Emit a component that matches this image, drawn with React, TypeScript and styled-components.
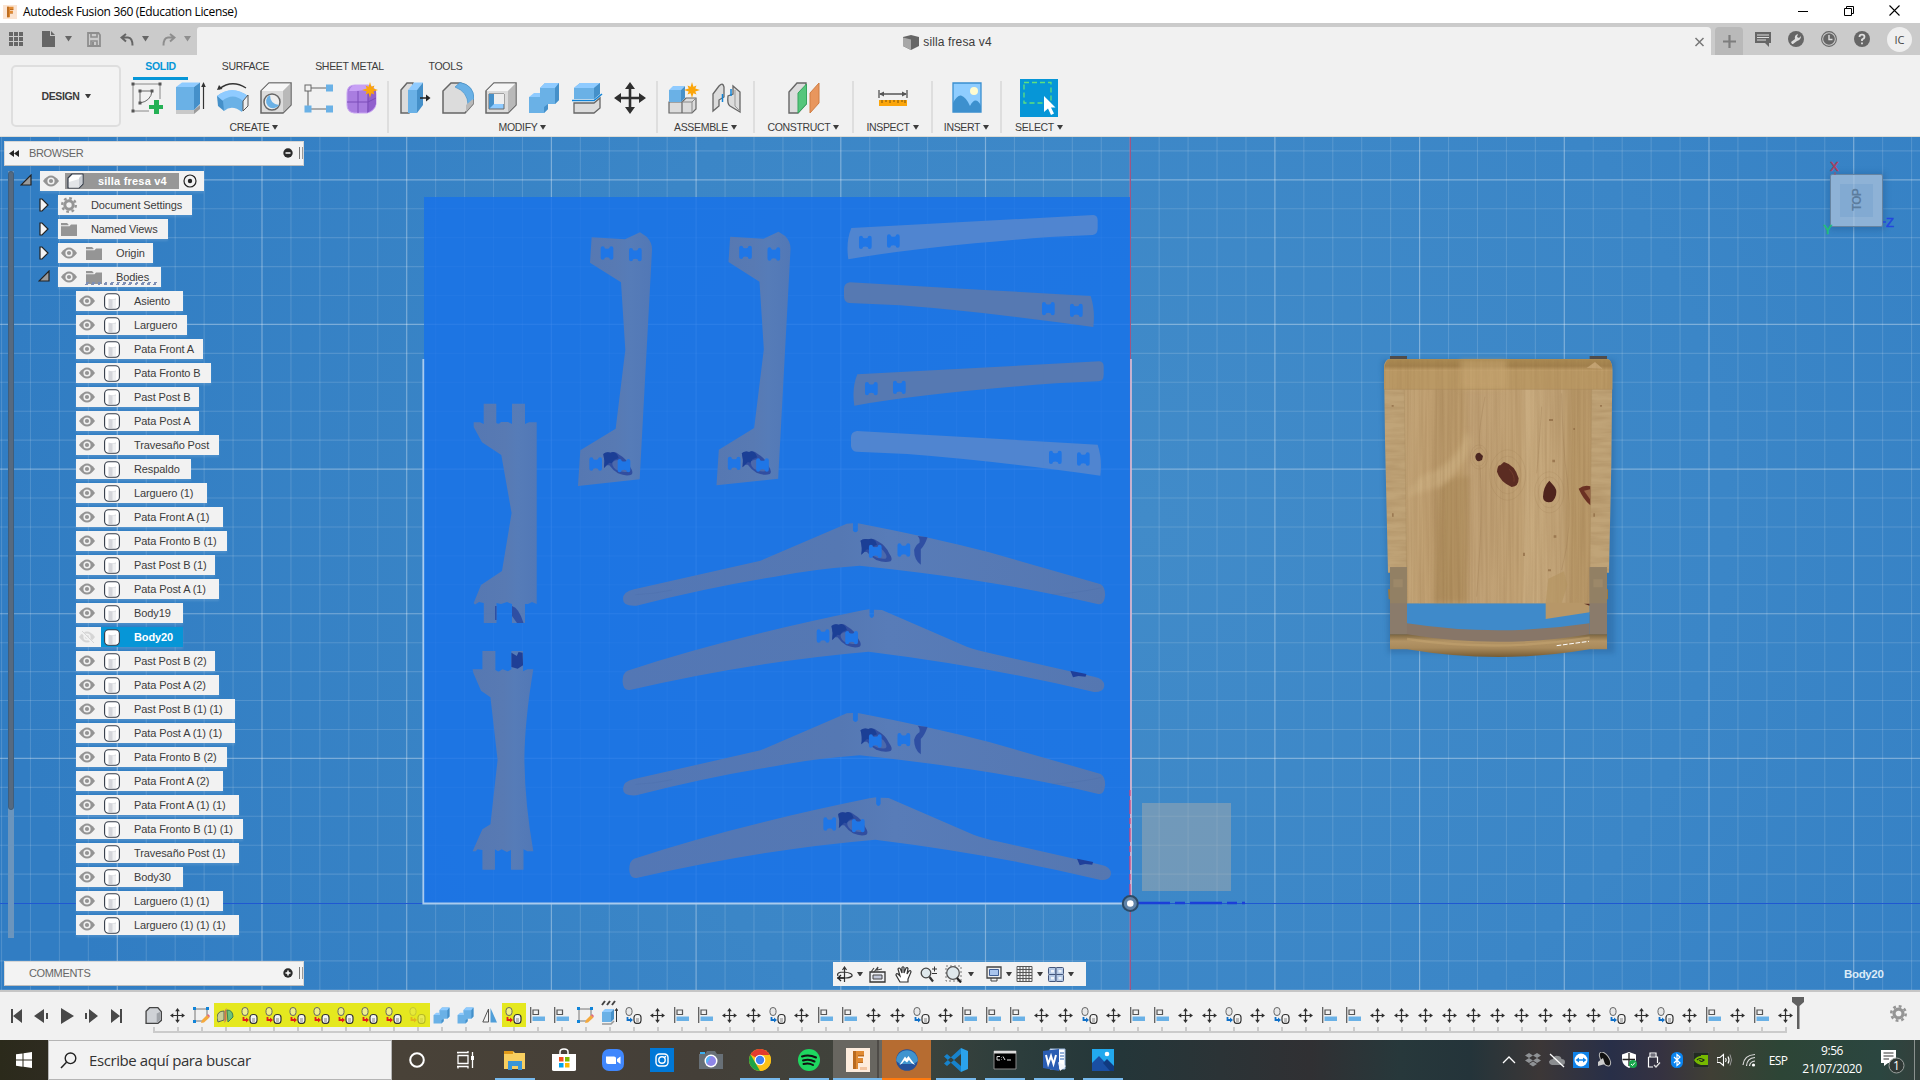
import React from 'react';
import styled, { createGlobalStyle } from 'styled-components';

const Global = createGlobalStyle`
  * { box-sizing: border-box; }
  body { margin: 0; overflow: hidden; background: #f1f1f1; }
  svg { display: block; flex: none; }
`;

const ui = `"Liberation Sans", Arial, sans-serif`;
const segoe = `"Open Sans", "Noto Sans", sans-serif`;

const Shell = styled.div`
  width: 1920px;
  height: 1080px;
  display: flex;
  flex-direction: column;
  font-family: ${ui};
  color: #3c3c3c;
  background: #f1f1f1;
  overflow: hidden;
  white-space: nowrap;
`;

/* ---------- title bar ---------- */
const TitleBar = styled.header`
  height: 23px;
  flex: none;
  background: #fff;
  display: flex;
  align-items: center;
  padding: 0 3px;
`;
const TitleText = styled.span`
  flex: 1;
  margin-left: 6px;
  font: 12px/22px ${segoe};
  letter-spacing: -0.33px;
  color: #000;
`;
const WinButton = styled.span`
  width: 45.5px;
  display: flex;
  justify-content: center;
  padding-bottom: 2px;
`;

/* ---------- tab strip ---------- */
const Strip = styled.div`
  height: 32px;
  flex: none;
  background: #cbcbcb;
  display: flex;
`;
const Quick = styled.div<{ $w: number }>`
  width: ${p => p.$w}px;
  display: flex;
  align-items: center;
  color: #666;
`;
const Cell = styled.span<{ $w: number; $faded?: boolean }>`
  width: ${p => p.$w}px;
  display: flex;
  justify-content: center;
  opacity: ${p => (p.$faded ? 0.6 : 1)};
`;
const DocTab = styled.div`
  width: 1514px;
  margin-top: 4px;
  padding: 2px 5px 0 0;
  background: #f1f1f1;
  border-radius: 3px 4px 0 0;
  display: flex;
  align-items: center;
`;
const DocName = styled.div`
  flex: 1;
  padding-left: 4px;
  display: flex;
  justify-content: center;
  align-items: center;
  gap: 4px;
  font-size: 12px;
  letter-spacing: 0.12px;
`;
const AddTab = styled.div`
  width: 28px;
  margin: 4px 3px 0 4px;
  background: #b9b9b9;
  border-radius: 4px 4px 0 0;
  display: flex;
  align-items: center;
  justify-content: center;
`;
const Avatar = styled.div`
  width: 25px;
  height: 25px;
  margin: 0 0 0 9px;
  border-radius: 50%;
  background: #efefef;
  font: 11px/25px ${segoe};
  text-align: center;
  color: #444;
`;

/* ---------- ribbon ---------- */
const Ribbon = styled.div`
  height: 82px;
  flex: none;
  display: flex;
  border-bottom: 1px solid #dcdcd6;
`;
const DesignButton = styled.button`
  width: 110px;
  height: 62px;
  margin: 10px 0 0 11px;
  background: #f3f3f3;
  border: 2px solid #dedede;
  border-radius: 5px;
  display: flex;
  align-items: center;
  justify-content: center;
  gap: 5px;
  font: bold 10.5px ${ui};
  letter-spacing: -0.35px;
  color: #3c3c3c;
`;
const RibbonBody = styled.div`
  display: flex;
  flex-direction: column;
`;
const Tabs = styled.nav`
  height: 26px;
  display: flex;
  padding-left: 11px;
`;
const Tab = styled.div<{ $w: number; $active?: boolean }>`
  width: ${p => p.$w}px;
  display: flex;
  justify-content: center;
  font-size: 10.5px;
  line-height: 22px;
  letter-spacing: -0.3px;
  font-weight: ${p => (p.$active ? 700 : 400)};
  color: ${p => (p.$active ? '#0696d7' : '#3c3c3c')};
`;
const TabText = styled.span<{ $active?: boolean }>`
  height: 24.5px;
  padding: 0 ${p => (p.$active ? 12 : 0)}px;
  border-bottom: 3px solid ${p => (p.$active ? '#0696d7' : 'transparent')};
`;
const Groups = styled.div`display: flex;`;
const Group = styled.section<{ $w: number; $last?: boolean }>`
  width: ${p => p.$w}px;
  height: 52px;
  display: flex;
  flex-direction: column;
  align-items: center;
  border-right: ${p => (p.$last ? 0 : 2)}px solid #dedede;
`;
const Tools = styled.div`
  height: 36px;
  flex: none;
  display: flex;
  gap: 11px;
  align-items: center;
  padding-bottom: 2px;
`;
const GroupLabel = styled.div`
  display: flex;
  align-items: center;
  gap: 3px;
  font-size: 10.5px;
  line-height: 21px;
  letter-spacing: -0.33px;
`;
const SelectTile = styled.div`
  width: 38px;
  height: 38px;
  flex: none;
  background: #0696d7;
  display: flex;
  align-items: center;
  justify-content: center;
`;

/* ---------- canvas ---------- */
const Canvas = styled.main`
  position: relative;
  height: 853px;
  flex: none;
`;
const Side = styled.aside`
  position: absolute;
  left: 0;
  top: 4px;
  width: 320px;
  display: flex;
  flex-direction: column;
`;
const PanelHead = styled.div<{ $top?: number }>`
  width: 300px;
  height: 25px;
  margin: ${p => p.$top || 0}px 0 0 4px;
  background: #f3f3f3;
  border: 1px solid #d6d6d6;
  border-bottom-color: #bdbdbd;
  display: flex;
  align-items: center;
  padding: 0 0 1px 4px;
  font-size: 11px;
  letter-spacing: -0.35px;
  color: #666;
`;
const HeadName = styled.span`
  width: 254px;
  flex: none;
  margin-left: 10px;
`;
const Collapse = styled.span`width: 10px; flex: none;`;
const Grip = styled.span`
  width: 4px;
  height: 12px;
  flex: none;
  margin-left: 6px;
  border-left: 1px solid #777;
  border-right: 1px solid #999;
`;
const TreeArea = styled.div`
  display: flex;
  padding: 5px 0 0 8px;
`;
const Track = styled.div`
  width: 6px;
  height: 767px;
  background: #6b95bd;
`;
const Thumb = styled.div`
  height: 639px;
  border-radius: 3px;
  background: #566a80;
  border: 1px solid #405e7c;
`;
const Tree = styled.div`
  display: flex;
  flex-direction: column;
  gap: 4px;
`;
const Row = styled.div<{ $in: number }>`
  display: flex;
  align-items: center;
  height: 20px;
  padding-left: ${p => p.$in}px;
`;
const Twist = styled.span<{ $w: number }>`
  width: ${p => p.$w}px;
  height: 14px;
`;
const Chip = styled.div<{ $w: number }>`
  position: relative;
  width: ${p => p.$w}px;
  height: 20px;
  background: #f2f2f2;
  display: flex;
  align-items: center;
  padding-left: 3px;
  font-size: 11px;
  letter-spacing: -0.1px;
  color: #3c3c3c;
  box-shadow: 0 2px 2px rgba(255, 255, 255, 0.12);
`;
const Slot = styled.span<{ $w: number; $gap?: number }>`
  width: ${p => p.$w}px;
  margin-left: ${p => p.$gap || 0}px;
  display: flex;
`;
const RootName = styled.div`
  width: 114px;
  height: 16px;
  margin-left: 6px;
  padding-left: 2px;
  background: #979797;
  display: flex;
  align-items: center;
  font-weight: 700;
  letter-spacing: 0.2px;
  color: #fff;
`;
const Picked = styled.div`
  display: flex;
  align-items: center;
  align-self: stretch;
  flex: 1;
  margin-left: -3px;
  padding-left: 3px;
  background: #0696d7;
  color: #fff;
  font-weight: 700;
`;
const Stitch = styled.i`
  position: absolute;
  left: 25px;
  right: 2px;
  bottom: 2px;
  height: 3px;
  background: repeating-linear-gradient(115deg, transparent 0 3px, #7e8fb5 3px 5.6px);
`;
const NavBar = styled.div`
  position: absolute;
  left: 833px;
  top: 825px;
  width: 253px;
  height: 24px;
  background: #f2f2f2;
  display: flex;
  align-items: center;
`;
const Hint = styled.div`
  position: absolute;
  left: 1844px;
  top: 829px;
  font: bold 11.5px/16px ${ui};
  letter-spacing: -0.35px;
  color: #dcebf7;
`;

/* ---------- timeline ---------- */
const Timeline = styled.div`
  height: 50px;
  flex: none;
  border-top: 2px solid #c6c6c6;
  background: #f1f1f1;
  display: flex;
`;
const Player = styled.div`
  width: 142px;
  height: 47px;
  padding-left: 4px;
  display: flex;
  align-items: center;
  color: #484848;
`;
const Steps = styled.div`
  width: 1656px;
  display: flex;
  padding-top: 11px;
`;
const Step = styled.div<{ $hot?: boolean; $end?: 'l' | 'r' }>`
  width: 24px;
  height: 31px;
  flex: none;
  display: flex;
  flex-direction: column;
  align-items: center;
  background:
    ${p => (p.$end === 'l' ? 'linear-gradient(#cbcbcb, #cbcbcb) 11px 28px / 13px 2px no-repeat' : p.$end === 'r' ? 'linear-gradient(#cbcbcb, #cbcbcb) 0 28px / 13px 2px no-repeat' : 'linear-gradient(#cbcbcb, #cbcbcb) 0 28px / 24px 2px no-repeat')},
    linear-gradient(${p => (p.$hot ? '#e5e81f, #e5e81f' : 'transparent, transparent')}) 0 0 / 24px 24px no-repeat;
  &::after { content: ''; width: 2px; height: 5px; flex: none; background: #cbcbcb; }
`;
const StepIcon = styled.span<{ $faded?: boolean; $raised?: boolean }>`
  height: ${p => (p.$raised ? 29 : 24)}px;
  margin-top: ${p => (p.$raised ? -5 : 0)}px;
  padding-right: 1px;
  flex: none;
  display: flex;
  align-items: center;
  opacity: ${p => (p.$faded ? 0.25 : 1)};
`;
const TimelineEnd = styled.div`
  flex: 1;
  display: flex;
  justify-content: space-between;
  align-items: center;
  padding: 0 13px 6px 0;
  margin-left: -7px;
`;

/* ---------- task bar ---------- */
const TaskBar = styled.footer`
  height: 40px;
  flex: none;
  display: flex;
  color: #fff;
  background: linear-gradient(90deg, #2b2a1b 0, #2e2b20 48px, #494238 400px, #443f38 700px, #3e443d 900px, #2c3d3c 1020px,
    #243639 1120px, #2b3336 1220px, #303033 1310px, #27383b 1400px, #24343a 1470px, #3c3737 1540px, #282f48 1610px,
    #353241 1660px, #403f35 1710px, #2d4536 1780px, #2b4640 1880px, #34403c 1920px);
`;
const StartButton = styled.div`
  width: 48px;
  display: flex;
  align-items: center;
  justify-content: center;
`;
const Search = styled.div`
  width: 344px;
  background: #f2f2f2;
  border: 1px solid #b5b5b5;
  display: flex;
  align-items: center;
  padding-left: 11px;
  gap: 12px;
  font: 15px ${segoe};
  letter-spacing: -0.41px;
  color: #333;
`;
const TaskItem = styled.div<{ $open?: boolean; $bg?: string; $line?: string; $wide?: boolean }>`
  width: 49px;
  height: 40px;
  flex: none;
  display: flex;
  flex-direction: column;
  align-items: center;
  justify-content: space-between;
  padding-top: 8px;
  background: ${p => p.$bg || 'none'};
  &::after {
    content: '';
    width: ${p => (p.$wide ? '100%' : '40px')};
    height: 2px;
    flex: none;
    background: ${p => (p.$open ? p.$line || '#76b9ed' : 'transparent')};
  }
`;
const Tray = styled.div`
  margin-left: auto;
  display: flex;
  align-items: center;
  font: 12px ${segoe};
`;
const Lang = styled.span`
  width: 34px;
  text-align: center;
  letter-spacing: -0.6px;
`;
const Clock = styled.div`
  width: 74px;
  text-align: center;
  line-height: 18px;
  letter-spacing: -0.42px;
`;
const Notice = styled.div`
  width: 46px;
  height: 40px;
  display: flex;
  align-items: center;
  justify-content: center;
  border-right: 1px solid #8a918e;
  margin-right: 5px;
`;

/* ---------- small glyphs ---------- */
const Caret = ({ s = 6 }: { s?: number }) => (
  <svg width={s} height={s * 0.8} viewBox="0 0 10 8"><path d="M0 0H10L5 8Z" fill="currentColor" /></svg>
);
const F360 = ({ s, small }: { s: number; small?: boolean }) => (
  <svg width={s} height={s} viewBox="0 0 24 24">
    <rect width="24" height="24" fill={small ? '#fbe4d2' : '#fdecdd'} />
    <path d="M7 3h11v4h-6v3h5v4h-5v7H7Z" fill="#e08a33" />
    <path d="M7 3h3v18H7Z" fill="#b96a1f" /><path d="M12 7h6v1.5h-6zM12 14h5v1h-5z" fill="#b96a1f" />
    {!small && <path d="M14 19h7v3h-7z" fill="#f3c5a2" />}
  </svg>
);
const Ic = ({ children, s = 32 }: { children: React.ReactNode; s?: number }) => (
  <svg width={s} height={s} viewBox={`0 0 ${s} ${s}`} fill="none">{children}</svg>
);
const B1 = '#6ab1e6', B2 = '#8fcbff', B3 = '#4590c9', G1 = '#dcdcdc', G2 = '#f6f6f6', G3 = '#b9b9b9', LN = '#666';
const Star = ({ x, y, r }: { x: number; y: number; r: number }) => {
  const pts = Array.from({ length: 16 }, (_, i) => {
    const a = (i * Math.PI) / 8 - Math.PI / 2;
    const k = i % 2 ? r * 0.45 : i % 4 ? r * 0.8 : r;
    return `${(x + Math.cos(a) * k).toFixed(1)},${(y + Math.sin(a) * k).toFixed(1)}`;
  }).join(' ');
  return <polygon points={pts} fill="#fba50a" />;
};
const MoveShape = ({ c = '#2f2f2f' }: { c?: string }) => (
  <path fill={c} d="M16 0l5 7h-3.7v7.700H25V11l7 5-7 5v-3.700h-7.700V25H21l-5 7-5-7h3.700v-7.700H7V21l-7-5 7-5v3.700h7.700V7H11Z" />
);

const SketchIcon = () => <Ic>
  <path d="M2 2H29M2 2V29M2 29H18M29 2V17" stroke="#888" strokeWidth="1" />
  <path d="M9 9H21M9 9V21M21 9Q20 19 9 21" stroke="#666" />
  <path d="M.5.500h3v3h-3zM27.500.500h3v3h-3zM.5 27.500h3v3h-3zM7.500 7.500h3v3h-3zM19.500 7.500h3v3h-3zM7.500 19.500h3v3h-3z" fill="#555" />
  <path d="M23 18h5v5h4v4h-4v5h-5v-5h-5v-4h5Z" fill="#25b155" />
</Ic>;
const ExtrudeIcon = () => <Ic>
  <path d="M2 28H20L26 23V27L20 32H2Z" fill="#9b9b9b" /><path d="M2 28H20V32H2Z" fill="#c9c9c9" />
  <path d="M2 5H20V28H2Z" fill={B1} /><path d="M2 5L8 .5H26L20 5Z" fill={B2} /><path d="M20 5L26 .5V22L20 28Z" fill={B3} />
  <path d="M29.500 27V3" stroke="#333" strokeWidth="1.200" /><path d="M27.200 5L29.500 0l2.300 5Z" fill="#333" />
</Ic>;
const RevolveIcon = () => <Ic>
  <path d="M0 14Q15 3 31 14L25 30Q15 22 7 29Z" fill={B1} /><path d="M0 14Q15 2 31 14L26 19Q16 10 5 19Z" fill={B2} />
  <path d="M26 19L31 13V24L26 29Z" fill="#eee" stroke="#555" /><path d="M0 14L6 19L7 29L1 24Z" fill={B3} />
  <path d="M2 7Q15-3 29 6" stroke="#333" strokeWidth="1.300" /><path d="M0 8L2 3l3.500 4Z" fill="#333" />
</Ic>;
const Box3 = () => <>
  <path d="M1 9L9 1H31V23L23 31H1Z" fill={G1} stroke={LN} strokeWidth="1.500" />
  <path d="M1.500 9L9 1.500H30.500L23 9Z" fill={G2} /><path d="M23 9L30.500 1.500V23L23 30.500Z" fill={G3} />
</>;
const HoleIcon = () => <Ic><Box3 /><circle cx="12" cy="20" r="8" fill="#eee" stroke={LN} strokeWidth="1.500" />
  <path d="M10 13Q10 22 19 23A7 7 0 1 1 10 13Z" fill={B1} /></Ic>;
const PatternIcon = () => <Ic>
  <path d="M8 6H24M5 9V24M8 27H24" stroke={LN} strokeWidth="1.100" />
  <rect x="2" y="3" width="6" height="6" stroke={LN} /><path d="M23 2.500h7v7h-7zM23 23.500h7v7h-7zM1.500 23.500h7v7h-7z" fill={B1} />
</Ic>;
const FormIcon = () => <Ic>
  <path d="M1 11Q1 3 9 3H22Q30 5 30 12V22Q29 29 21 31H8Q1 30 1 23Z" fill="#a97de0" stroke="#c9a6f2" />
  <path d="M3 9Q5 3 10 3H22L26 7Q16 9 3 9Z" fill="#c7a0f5" /><path d="M22 11L30 8V22Q28 28 21 31Z" fill="#9160cd" />
  <path d="M12 9V31M1 20H22L30 16M22 10V30" stroke="#7a4cb8" strokeWidth="1" /><Star x={24} y={8} r={8} />
</Ic>;
const PressIcon = () => <Ic>
  <path d="M2 8L8 1H14V25L10 31H2Z" fill={G1} stroke={LN} strokeWidth="1.500" />
  <path d="M9 8H18V31H9Z" fill={B1} /><path d="M9 8L15 .5H24L18 8Z" fill={B2} /><path d="M18 8L24 .5V23L18 31Z" fill={B3} />
  <path d="M21 16H28" stroke="#222" strokeWidth="1.500" /><path d="M27 12.500L31.500 16L27 19.500Z" fill="#222" />
</Ic>;
const FilletIcon = () => <Ic>
  <path d="M1 9L9 1H18Q31 4 31 18V22L23 31H1Z" fill={G1} stroke={LN} strokeWidth="1.500" />
  <path d="M13 5L18 .5Q32 3 32 17L26 23Q26 10 13 5Z" fill={B1} stroke={B3} strokeWidth=".7" /><path d="M24 23L31 17V22L24 30Z" fill={G3} />
</Ic>;
const ShellIcon = () => <Ic><Box3 /><path d="M4 12H19V27H4Z" fill={B2} stroke={LN} /><path d="M4 12H9V22L4 27Z" fill={B3} /><path d="M9 12H19V22H9Z" fill="#eee" /></Ic>;
const Combine = () => <>
  <path d="M1 15H12V6L17 1H31V18L27 22H20V27L16 31H1Z" fill={B1} />
  <path d="M1 15L6 11H12V15ZM12 6L17 1H31L27 6Z" fill={B2} /><path d="M27 6L31 1V18L27 22ZM16 25L20 22V27L16 31Z" fill={B3} />
</>;
const CombineIcon = () => <Ic><Combine /></Ic>;
const SplitIcon = () => <Ic>
  <path d="M3 6L9 1H29V12L23 17H3Z" fill={B1} /><path d="M3 6L9 1H29L23 6Z" fill={B2} /><path d="M23 6L29 1V12L23 17Z" fill={B3} />
  <path d="M3 21H23L29 16V26L23 31H3Z" fill={G1} stroke={LN} strokeWidth="1.300" /><path d="M1 18.500H23L31 12" stroke="#1184d8" strokeWidth="1.600" />
</Ic>;
const MoveIcon = () => <Ic><MoveShape /></Ic>;
const AssembleIcon = () => <Ic>
  <path d="M1 20H14V31H1ZM14 20L18 16H28V27L24 31H14Z" fill={G1} stroke={LN} strokeWidth="1.200" /><path d="M14 20H24L28 16M24 20V31" stroke="#888" />
  <path d="M1 8H13V20H1Z" fill={B1} /><path d="M1 8L5 4H17L13 8Z" fill={B2} /><path d="M13 8L17 4V16L13 20Z" fill={B3} /><Star x={24} y={8} r={8} />
</Ic>;
const JointIcon = () => <Ic>
  <path d="M2 12L8 4Q12 0 13 5V15L8 18V24L2 29Z" fill={G1} stroke={LN} strokeWidth="1.300" />
  <path d="M29 30L19 24Q16 22 17 14L22 12V4L29 10Z" fill={G1} stroke={LN} strokeWidth="1.300" />
  <path d="M11.500 12V20M20 7V14" stroke="#1184d8" strokeWidth="1.500" /><path d="M24 8V24L29 29" stroke="#999" />
</Ic>;
const PlaneIcon = () => <Ic>
  <path d="M1 10L9 1H18V22L10 31H1Z" fill={G1} stroke={LN} strokeWidth="1.400" /><path d="M10 11L18.500 2V22L10 31Z" fill="#56c67c" stroke="#36a55d" />
  <path d="M22 11L31 1V21L22 31Z" fill="#e8965d" stroke="#cf7d43" />
</Ic>;
const RulerIcon = () => <Ic><path d="M2 8V16M30 8V16M3 12H29" stroke="#555" strokeWidth="1.300" /><path d="M2 12l5-2.500v5ZM30 12l-5-2.500v5Z" fill="#555" />
  <path d="M2 18H30V24H2Z" fill="#fba50a" /><path d="M5 18v3M9 18v2M13 18v3M17 18v2M21 18v3M25 18v2M28 18v3" stroke="#7a5208" /></Ic>;
const InsertIcon = () => <Ic><path d="M2 1H30V30H2Z" fill="#8fcdff" stroke="#3a8fd0" strokeWidth="1.300" /><circle cx="23" cy="9" r="4" fill="#fffbd0" />
  <path d="M2 21Q6 13 10 13.500Q15 15 19 24Q22 18 25 18.500Q28 19 30 24V30H2Z" fill="#3d90ce" /></Ic>;
const SelectIcon = () => <svg width="34" height="34" viewBox="0 0 34 34" fill="none"><path d="M2 1.500H29V22H2Z" stroke="#5fe07c" strokeWidth="1.300" strokeDasharray="5 3" />
  <path d="M22 15V31L26 27.500L29 34L32 32.500L29 26.500H33.500Z" fill="#fff" /></svg>;

/* ---------- tree glyphs ---------- */
const Eye = ({ off }: { off?: boolean }) => (
  <svg width="16" height="12" viewBox="0 0 16 12" fill="none" opacity={off ? 0.3 : 1}>
    <path d="M0 6Q8-5 16 6Q8 17 0 6Z" fill="#949494" /><circle cx="8" cy="6" r="3.600" fill="#f2f2f2" /><circle cx="8" cy="6" r="2.100" fill="#949494" />
    {off && <path d="M2 0L14 12" stroke="#f2f2f2" strokeWidth="2.500" />}{off && <path d="M3 0L15 12" stroke="#949494" />}
  </svg>
);
const BodyGlyph = () => (
  <svg width="16" height="17" viewBox="0 0 16 17"><rect x=".6" y=".8" width="14.800" height="15.400" rx="4" fill="#fff" stroke="#333b48" strokeWidth="1.100" />
    <path d="M4.500 5.500Q8 7 12 5.500V15H4.500Z" fill="#d4d5da" /><path d="M8.500 6.500H12V15H8.500Z" fill="#eff0f2" /></svg>
);
const Folder = () => <svg width="16" height="13" viewBox="0 0 16 13"><path d="M0 0H6L7.500 1.500V2.200H0ZM0 3.200H8.500L10 1.500H16V13H0Z" fill="#959595" /></svg>;
const Gear = ({ s = 16 }: { s?: number }) => (
  <svg width={s} height={s} viewBox="0 0 16 16" fill="none"><circle cx="8" cy="8" r="4.200" stroke="#959595" strokeWidth="3" />
    <circle cx="8" cy="8" r="6.800" stroke="#959595" strokeWidth="2.400" strokeDasharray="2.670 2.670" /></svg>
);
const Closed = () => <svg width="10" height="14" viewBox="0 0 10 14"><path d="M1 1H3L9 7L3 13H1Z" fill="#f4f4f4" stroke="#222" strokeWidth="1.200" /></svg>;
const Open = () => <svg width="12" height="12" viewBox="0 0 12 12"><path d="M11 1V11H1Z" fill="#9a9a9a" stroke="#222" strokeWidth="1.200" /></svg>;
const CubeGlyph = () => <svg width="17" height="16" viewBox="0 0 17 16"><path d="M1 5L5 1H16V11L12 15H1Z" fill="#fff" stroke="#333b48" strokeWidth="1.200" strokeLinejoin="round" /><path d="M12 5L15.400 1.600V11L12 14.400Z" fill="#c8ccd2" /><path d="M2 14.400V9L12 6V14.400Z" fill="#e3e5e8" /></svg>;

/* ---------- timeline glyphs ---------- */
const tl: Record<string, (hot: boolean) => React.ReactNode> = {
  b: () => <svg width="17" height="17" viewBox="0 0 32 32" fill="none"><path d="M2 8L9 1H24L31 9V25L24 31H2Z" fill="#cfd2d6" stroke="#444" strokeWidth="2.500" /><path d="M22 12L29 9V24L22 30Z" fill="#9fa3a8" /></svg>,
  m: () => <svg width="15" height="15" viewBox="0 0 32 32"><MoveShape /></svg>,
  s: () => <svg width="17" height="17" viewBox="0 0 17 17" fill="none"><path d="M2 2H14V9M2 2V14H10" stroke="#777" /><path d="M0 0h3v3H0zM13 0h3v3h-3zM0 13h3v3H0z" fill="#1184d8" /><path d="M8 16L9 13L14 8L16.500 10.500L11 15.500Z" fill="#f5a93c" /><path d="M14 8l1-1 2 2-1 1.500Z" fill="#e0667c" /></svg>,
  p: () => <svg width="17" height="15" viewBox="0 0 17 15"><path d="M0 10Q0 3 7 3V12L1 14Z" fill="#c9cf94" stroke="#5d6b57" /><path d="M7.500 3L9.500 0V12L7.500 15Z" fill="#c8755a" /><path d="M10 2Q16 2 16 9L11 14Z" fill="#6cc37b" stroke="#3c7f54" /></svg>,
  c: hot => <svg width="17" height="17" viewBox="0 0 17 17" fill="none"><rect x="1" y=".5" width="6" height="8" rx="3" fill={hot ? '#eef08a' : '#e8e8e8'} stroke="#666" /><rect x="9" y="7.500" width="7" height="9" rx="3" fill="#f4f4f4" stroke="#333" strokeWidth="1.200" /><path d="M11 11h3v5h-3z" fill="#bbb" /><path d="M2.500 10V13H6" stroke={hot ? '#e21c1c' : '#1070c8'} strokeWidth="1.800" /><path d="M5 10.500L8 13L5 15.500Z" fill={hot ? '#e21c1c' : '#1070c8'} /></svg>,
  j: () => <svg width="17" height="17" viewBox="0 0 32 32"><Combine /></svg>,
  r: () => <svg width="15" height="15" viewBox="0 0 15 15"><path d="M6.500 1V14H.8Z" fill="#f4f4f4" stroke="#555" /><path d="M8.500 0L15 14.500H8.500Z" fill="#4f9ed9" /></svg>,
  a: () => <svg width="15" height="16" viewBox="0 0 15 16" fill="none"><path d="M.7 0V16" stroke="#555" strokeWidth="1.200" /><path d="M3 3H8.500V7.500H3Z" stroke="#555" strokeWidth="1.200" /><path d="M2.500 9.500H15V14H2.500Z" fill={B1} /></svg>,
  e: () => <svg width="17" height="26" viewBox="0 0 17 26" fill="none"><path d="M1 12H10V22H1Z" fill={B1} /><path d="M1 12L4 9H13L10 12Z" fill={B2} /><path d="M10 12L13 9V19L10 22Z" fill={B3} /><path d="M1 24H10L13 21" stroke="#999" strokeWidth="1.600" /><path d="M15.500 22V9M14 11l1.500-2.500L17 11" stroke="#333" /><path d="M1 5L4 1M6 5L9 1M11 5L14 1" stroke="#444" strokeWidth="2" /></svg>,
};
const steps = 'bmspcccccccc' + 'jjrc' + 'aase' + 'cmaammcmaammcmaaammcmaammcmcmaa' + 'mmmmmmmmmm' + 'cmcmamam';

/* ---------- data ---------- */
const bodies: [string, number][] = [
  ['Asiento', 107], ['Larguero', 111], ['Pata Front A', 127], ['Pata Fronto B', 135], ['Past Post B', 123], ['Pata Post A', 123],
  ['Travesaño Post', 143], ['Respaldo', 115], ['Larguero (1)', 131], ['Pata Front A (1)', 147], ['Pata Fronto B (1)', 151],
  ['Past Post B (1)', 139], ['Pata Post A (1)', 143], ['Body19', 107], ['Body20', 107], ['Past Post B (2)', 139], ['Pata Post A (2)', 143],
  ['Past Post B (1) (1)', 159], ['Pata Post A (1) (1)', 159], ['Pata Fronto B (2)', 151], ['Pata Front A (2)', 147],
  ['Pata Front A (1) (1)', 163], ['Pata Fronto B (1) (1)', 167], ['Travesaño Post (1)', 163], ['Body30', 107],
  ['Larguero (1) (1)', 147], ['Larguero (1) (1) (1)', 163],
];
const groups: { name: string; w: number; icons: (() => React.ReactElement)[] }[] = [
  { name: 'CREATE', w: 268, icons: [SketchIcon, ExtrudeIcon, RevolveIcon, HoleIcon, PatternIcon, FormIcon] },
  { name: 'MODIFY', w: 269, icons: [PressIcon, FilletIcon, ShellIcon, CombineIcon, SplitIcon, MoveIcon] },
  { name: 'ASSEMBLE', w: 97, icons: [AssembleIcon, JointIcon] },
  { name: 'CONSTRUCT', w: 99, icons: [PlaneIcon] },
  { name: 'INSPECT', w: 79, icons: [RulerIcon] },
  { name: 'INSERT', w: 69, icons: [InsertIcon] },
];

/* ---------- model view ---------- */
const STOCK = '#1f76e6';
const Notch = ({ x, y, kx = 1 }: { x: number; y: number; kx?: number }) => (
  <path transform={`translate(${x} ${y}) scale(${kx} 1)`} fill={STOCK}
    d="M-19-14q0-6 6-6q6 0 6 6q7 3 14 0q0-6 6-6q6 0 6 6V14q0 6-6 6q-6 0-6-6q-7-3-14 0q0 6-6 6q-6 0-6-6z" />
);
const Knot = ({ x, y, kx = 1, ky = 1 }: { x: number; y: number; kx?: number; ky?: number }) => (
  <g transform={`translate(${x} ${y}) scale(${kx} ${ky})`}>
    <path d="M-40-30Q-32-38-18-34Q-4-40 8-28Q30-16 40 8Q52 26 44 32Q28 38 4 28Q-12 18-22 4L-30 4L-38 12Q-34-8-40-30Z" fill="#2a479c" opacity=".85" />
    <path d="M-40-30Q-32-38-18-34Q-6-40 2-28L6-18L-8-12L-14-2L-22-4L-30 4L-38 12Q-34-8-40-30Z" fill="#1b3f96" />
    <path d="M-12-6Q6-20 24 0Q38 18 30 24Q10 26-4 16Q-16 4-12-6Z" fill="#4c69ab" />
  </g>
);
const Upright = () => <>
  <path d="M575 172L675 178L720 157L740 170Q757 188 756 210L719 898L534 918L541 811L647 746L676 510L663 307L570 248Z" fill="url(#partV)" />
  <Knot x={650} y={852} />
  <Notch x={621} y={219} /><Notch x={706} y={224} /><Notch x={587} y={852} /><Notch x={672} y={857} />
</>;
const RailA = ({ fill }: { fill: string }) => <>
  <path d="M94 144L820 105Q833 106 833 120V145Q833 164 818 165L690 171Q300 200 85 238Q77 185 94 144Z" fill={fill} />
  <Notch x={136} y={187} /><Notch x={220} y={183} />
</>;
const RailB = ({ fill }: { fill: string }) => <>
  <path d="M90 307Q72 310 72 326V352Q74 368 88 369L240 376Q500 396 820 441Q826 390 812 348L480 329Z" fill={fill} />
  <Notch x={685} y={386} /><Notch x={769} y={391} />
</>;
const LegL = () => <>
  <path d="M911 71L925 70V92Q931 102 936 92V70Q1100 112 1230 157L1480 253Q1490 262 1490 285Q1488 315 1475 313Q1250 240 940 197Q830 208 750 230Q600 262 440 317Q410 320 410 297Q410 275 435 268L718 182Z" fill="url(#partH)" />
  <path d="M1062 150Q1066 134 1074 128Q1076 116 1070 108L1092 112Q1086 136 1077 148V194Q1062 180 1062 150Z" fill="#2848a0" opacity=".85" />
  <path d="M1480 264Q1420 280 1370 284M438 284Q480 282 520 270" stroke="#4466a4" strokeWidth="1.500" opacity=".4" />
  <Knot x={974} y={152} kx={0.8} />
  <Notch x={975} y={154} kx={0.75} /><Notch x={1039} y={150} kx={0.75} />
</>;
const LegR = () => <>
  <path d="M947 331L962 328V348Q967 360 972 348V329L990 330L1180 440Q1200 450 1240 462L1465 530Q1488 535 1488 558Q1486 577 1465 576Q1230 500 960 455Q700 485 425 570Q410 572 409 545Q409 518 420 512Q640 415 947 331Z" fill="url(#partH)" />
  <path d="M1412 512L1448 522L1446 530L1430 528L1418 532Z" fill="#1f3f9a" />
  <Knot x={907} y={408} kx={0.75} />
  <Notch x={858} y={408} kx={0.75} /><Notch x={922} y={413} kx={0.75} />
</>;
const AXIS_Y = 903;
const lines = (from: number, step: number, max: number) => {
  const out: { p: number; major: boolean }[] = [];
  for (let i = -10; from + i * step < max; i++) out.push({ p: from + i * step, major: i % 5 === 0 });
  return out;
};

const Viewport = () => (
  <svg width="1920" height="853" viewBox="0 137 1920 853" fill="none">
    <defs>
      <radialGradient id="bg" cx="1150" cy="520" r="1150" gradientUnits="userSpaceOnUse">
        <stop offset="0" stopColor="#418bc9" /><stop offset=".5" stopColor="#3b86c7" /><stop offset="1" stopColor="#317dc3" />
      </radialGradient>
      <linearGradient id="partV" x1="0" x2="1" y1="0" y2="0"><stop offset="0" stopColor="#5678b2" /><stop offset=".5" stopColor="#587ab3" /><stop offset=".7" stopColor="#567cb8" /><stop offset="1" stopColor="#5278b6" /></linearGradient>
      <linearGradient id="partH" x1="0" x2="1" y1="0" y2="0"><stop offset="0" stopColor="#5377b5" /><stop offset=".45" stopColor="#5578b3" /><stop offset=".55" stopColor="#587cb8" /><stop offset="1" stopColor="#5577b1" /></linearGradient>
      <linearGradient id="roll" x1="0" x2="0" y1="0" y2="1"><stop offset="0" stopColor="#ab8b53" /><stop offset=".6" stopColor="#a2814e" /><stop offset="1" stopColor="#c09e68" /></linearGradient>
      <linearGradient id="bar" x1="0" x2="0" y1="0" y2="1"><stop offset="0" stopColor="#7b6540" /><stop offset=".3" stopColor="#b39465" /><stop offset=".6" stopColor="#a98a5c" /><stop offset="1" stopColor="#765c34" /></linearGradient>
      <linearGradient id="planks" x1="0" x2="1" y1="0" y2="0">
        <stop offset="0" stopColor="#c3a578" /><stop offset=".14" stopColor="#c0a072" /><stop offset=".17" stopColor="#b8986a" /><stop offset=".3" stopColor="#bc9c6d" />
        <stop offset=".36" stopColor="#c0a176" /><stop offset=".62" stopColor="#c1a275" /><stop offset=".65" stopColor="#c9ac80" /><stop offset=".84" stopColor="#c1a377" /><stop offset=".9" stopColor="#b79767" /><stop offset="1" stopColor="#b9996a" />
      </linearGradient>
      <filter id="grainV" x="0" y="0" width="1" height="1" colorInterpolationFilters="sRGB"><feTurbulence type="fractalNoise" baseFrequency="0.13 0.003" numOctaves="2" seed="4" />
        <feColorMatrix values="0 0 0 0 .5  0 0 0 0 .36  0 0 0 0 .2  1.200 0 0 0 -.4" /><feComposite in2="SourceGraphic" operator="in" /></filter>
      <filter id="grainH" x="0" y="0" width="1" height="1" colorInterpolationFilters="sRGB"><feTurbulence type="fractalNoise" baseFrequency="0.008 0.060" numOctaves="3" seed="9" />
        <feColorMatrix values="0 0 0 0 .5  0 0 0 0 .36  0 0 0 0 .2  1.200 0 0 0 -.4" /><feComposite in2="SourceGraphic" operator="in" /></filter>
      <filter id="soft" x="-.2" y="-.2" width="1.400" height="1.400"><feGaussianBlur stdDeviation="8" /></filter>
      <filter id="cubeShade" x="-.2" y="-.2" width="1.400" height="1.400"><feGaussianBlur stdDeviation="3" /></filter>
    </defs>
    <rect y="137" width="1920" height="853" fill="url(#bg)" />
    {lines(117.3, 28.94, 1920).map(l => <path key={l.p} d={`M${l.p} 137V990`} stroke="#fff" strokeWidth={l.major ? 1.2 : 1.1} opacity={l.major ? 0.34 : 0.14} />)}
    {lines(179.8, 28.93, 990).filter(l => Math.abs(l.p - AXIS_Y) > 5).map(l => <path key={l.p} d={`M0 ${l.p}H1920`} stroke="#fff" strokeWidth={l.major ? 1.2 : 1.1} opacity={l.major ? 0.34 : 0.14} />)}
    <path d={`M0 ${AXIS_Y + 0.5}H1920`} stroke="#1f58d2" strokeWidth="1" />
    <path d="M1130.300 137V990" stroke="#a2527f" strokeWidth="1.300" />
    <rect x="424" y="197" width="706" height="706.500" fill="#1771e9" opacity=".82" />
    <path d="M423.300 359V903.500H1130" stroke="#a9cbee" strokeWidth="1.800" />
    <path d="M1131 359V903" stroke="#d0b9d4" strokeWidth="1.800" />
    <path d="M1130 790V900" stroke="#d2407a" strokeWidth="1.200" strokeDasharray="6 4 14 4" />

    <g transform="translate(400 180) scale(.33333)"><Upright /><g transform="translate(415.500 -2)"><Upright /></g></g>
    <path d="M473.700 422.300H480L483.700 424V403.700H496.300V423Q499 425 501 422H508L512 424V403.700H525V424L529 422.300H536.700V604L532 602L528 604H525V623H512V604L507 602L501 604L496.500 603V623H483.800V603L479 602L475 604.500L473.700 603L481 585L502 571L511.600 513L501.300 455L482 442.300L473.700 427Z" fill="url(#partV)" />
    <path d="M512 606Q519 608 523.500 623H517L512 616ZM495 606h1.500v14h-1.500z" fill="#2848a0" opacity=".85" />
    <g transform="translate(440 500) scale(.44643 .33333)">
      <path d="M73 508H95V453H124V510L131 515L140 508L152 514L160 508V453H186V514L196 508H209Q190 660 189 775Q190 910 209 1054H196L187 1048V1109H159V1050L150 1056L138 1048L130 1054L123 1048V1109H95V1050L84 1048L80 1054H73L95 988L113 973L129 780L113 592L92 572L75 520Z" fill="url(#partV)" />
      <path d="M160 458L172 468L176 456L185 458L186 496L174 506L160 501Z" fill="#1f3f96" />
      <LegL /><g transform="translate(0 569)"><LegL /></g>
      <LegR /><g transform="translate(15 564)"><LegR /></g>
    </g>
    <g transform="translate(820 180) scale(.33333)">
      <RailA fill="#5085d0" /><RailB fill="#5679b2" />
      <g transform="translate(18 439)"><RailA fill="#5679b2" /></g>
      <g transform="translate(21 446)"><RailB fill="#5085d0" /></g>
    </g>

    <g transform="translate(1360 340) scale(.33333)">
      <path d="M66 60H764V940H84Z" fill="#1c4f83" opacity=".3" filter="url(#soft)" />
      <path d="M141 790H689V900H141Z" fill="#3f8aca" />
      <path d="M90 48H141V60H90ZM689 48H741V60H689Z" fill="#4e4c4c" />
      <path d="M88 57H742Q757 60 757 90L754 370L747 698H690V790H141V698H84L75 300L72 80Q74 60 88 57Z" fill="#c0a478" />
      <path d="M133 148H695L689 790H141Z" fill="url(#planks)" />
      <path d="M240 440Q290 400 330 410L322 786H220Z" fill="#9d7b49" opacity=".32" filter="url(#soft)" />
      <path d="M140 470Q170 400 230 390Q300 350 320 270L335 300Q330 370 240 440Z" fill="#cfb385" opacity=".6" filter="url(#soft)" />
      <path d="M88 57H742Q757 60 757 92H72Q74 60 88 57Z" fill="url(#roll)" />
      <path d="M72 92H757V148H72Z" fill="#ba9965" /><path d="M300 60H440V148H300Z" fill="#c9a974" opacity=".55" filter="url(#soft)" />
      <path d="M680 84L705 66L728 86Z" fill="#c5a574" />
      <path d="M133 148H695L689 790H141Z" fill="#000" filter="url(#grainV)" opacity=".3" />
      <path d="M72 60H757V148H72Z" fill="#000" filter="url(#grainV)" opacity=".2" />
      <path d="M72 148H133L141 698H84ZM695 148H757L747 698H690Z" fill="#000" filter="url(#grainH)" opacity=".35" />
      <path d="M72 148H757" stroke="#a5885a" strokeWidth="1.500" /><path d="M133 148L141 790M695 148L689 790" stroke="#aa8d61" strokeWidth="1.500" />
      {[[357, 351, 26], [443, 405, 54], [568, 457, 44]].map(k => <g key={k[0]} stroke="#9a7a50" strokeWidth="1.400" opacity=".4">
        <ellipse cx={k[0]} cy={k[1]} rx={k[2]} ry={k[2] * 1.4} /><ellipse cx={k[0]} cy={k[1]} rx={k[2] * 0.75} ry={k[2] * 1.050} /></g>)}
      <path d="M375 170Q350 300 362 325M360 380Q370 520 350 770M605 160Q608 330 622 420Q640 560 605 690M545 200Q535 360 530 400" stroke="#8f7047" strokeWidth="1.800" opacity=".4" />
      <path d="M346 350Q347 338 359 338L369 348L366 360L357 364Q347 362 346 350Z" fill="#4b2620" />
      <path d="M432 366Q465 375 476 415Q476 440 455 441Q420 425 411 395Q413 372 421 376Z" fill="#5b2c22" />
      <path d="M448 388Q465 405 462 425" stroke="#6f3a2c" strokeWidth="3" />
      <path d="M568 422L580 436Q592 448 588 465Q582 488 565 487Q549 484 549 470Q550 440 568 422Z" fill="#4f241d" />
      <path d="M656 446Q672 434 691 439V496Q670 478 656 446Z" fill="#6b3123" /><path d="M672 452L690 448V478Z" fill="#9a6847" />
      <path d="M567 237h12v6h-12zM577 359h8v8h-8zM581 586h8v7h-8zM489 638h6v10h-6zM564 688h9v6h-9zM96 520h5v10h-5zM700 520h5v10h-5zM640 264h5v6h-5zM95 195h6v5h-6zM720 195h6v5h-6z" fill="#805a35" opacity=".55" />
      <path d="M565 716L612 694L622 735L605 790H557Z" fill="#b3935f" opacity=".6" /><path d="M557 788H689V817L557 837Z" fill="#b79768" /><path d="M672 791H689V797Z" fill="#5a2a20" />
      <path d="M84 748H92V778H86ZM738 748H744V778H738Z" fill="#9b7840" />
      <path d="M90 682H141V884H90ZM689 682H741V884H689Z" fill="#8a7b6b" /><path d="M90 682H141V790H90ZM689 682H741V790H689Z" fill="#928064" />
      <path d="M100 718H128V742H100ZM700 718H728V742H700Z" fill="#9c8869" />
      <path d="M141 850Q415 892 689 850V890Q415 930 141 890Z" fill="#877668" />
      <path d="M90 883H141Q415 928 689 883H741V928H689Q415 974 141 928H90Z" fill="url(#bar)" />
      <path d="M141 897Q415 938 689 893" stroke="#c5a572" strokeWidth="7" opacity=".5" />
      <path d="M590 917L687 904" stroke="#fff" strokeWidth="3" strokeDasharray="14 5" />
    </g>

    <rect x="1142" y="803" width="89" height="88" fill="#a3a9ac" opacity=".5" />
    <path d="M1138 903H1245" stroke="#1b3fd8" strokeWidth="2.400" strokeDasharray="32 5 10 5" />
    <circle cx="1130.300" cy="903.500" r="7.500" fill="#5f83a8" stroke="#2c4a66" strokeWidth="2" /><circle cx="1130.300" cy="903.500" r="3.300" fill="#fff" />

    <rect x="1829" y="173" width="56" height="57" fill="#1c4f83" opacity=".35" filter="url(#cubeShade)" />
    <rect x="1830.500" y="174.500" width="52" height="52" rx="1.500" fill="#8eb2d6" stroke="#6684a2" />
    <rect x="1840" y="184" width="33" height="33" fill="#82aad2" />
    <path d="M1853.900 175V226" stroke="#fff" opacity=".2" />
    <text transform="translate(1861 211) rotate(-90)" fontFamily={ui} fontSize="12" letterSpacing="-.9" fontWeight="700" fill="#5c7d9e">TOP</text>
    <g fontFamily={ui} fontSize="13" strokeWidth=".5"><text x="1830" y="171" fill="#a9405f" stroke="#a9405f">X</text><text x="1886" y="227" fill="#2347de" stroke="#2347de">Z</text><text x="1823.500" y="234" fill="#1fc074" stroke="#1fc074">Y</text></g>
    <path d="M1883 222h3" stroke="#2347de" strokeWidth="1.500" /><path d="M1835 172v3" stroke="#a94a67" />
  </svg>
);

const NavIcons = () => (
  <>
    <Cell $w={23}><svg width="17" height="17" viewBox="0 0 17 17" fill="none"><path d="M8.500 1V16M6.500 4L8.500 1L10.500 4M2 10Q0 6 8 6Q17 7 16 10Q14 12 9 12L3 12" stroke="#333" strokeWidth="1.200" /><path d="M5 9L2 12L5 15M1 12h8" stroke="#222" strokeWidth="1.300" /></svg></Cell>
    <Cell $w={8}><Caret /></Cell>
    <Cell $w={26}><svg width="17" height="17" viewBox="0 0 17 17" fill="none"><path d="M1 6H16V16H1Z" fill="#eceef3" stroke="#333" strokeWidth="1.300" /><path d="M4 9H13V13H4Z" fill="#c3c8da" stroke="#444" /><path d="M2 6L5 2M5 6L9 1L8 4L13 3" stroke="#444" strokeWidth="1.200" /></svg></Cell>
    <Cell $w={27}><svg width="17" height="17" viewBox="0 0 17 17"><path d="M5 16L1 9Q1 7 3 8L5 10L3 3Q4 1 5.500 3L7 7L7 1.500Q8 0 9 1.500V7L11 2Q12 1 13 2.500L12 8L14 5Q16 4 16 6L13 13V16Z" fill="#fff" stroke="#333" strokeWidth="1.200" /></svg></Cell>
    <Cell $w={23}><svg width="17" height="17" viewBox="0 0 17 17" fill="none"><circle cx="6" cy="7" r="4.800" fill="#dfe8ec" stroke="#444" strokeWidth="1.300" /><path d="M9.500 11L13 15.500" stroke="#333" strokeWidth="2.200" /><path d="M12 3h5M14.500.500v5M12 7.500h5" stroke="#333" /></svg></Cell>
    <Cell $w={28}><svg width="18" height="18" viewBox="0 0 18 18" fill="none"><path d="M1 1H16V16H1Z" stroke="#777" strokeDasharray="2 2" /><circle cx="8" cy="8" r="6.300" fill="#dfe8ec" stroke="#555" strokeWidth="1.300" /><path d="M12 13L16 17.500" stroke="#222" strokeWidth="2.200" /></svg></Cell>
    <Cell $w={5}><Caret /></Cell>
    <Cell $w={9} />
    <Cell $w={24}><svg width="16" height="16" viewBox="0 0 16 16" fill="none"><path d="M1 1H15V12H1Z" fill="#eee" stroke="#444" strokeWidth="1.300" /><path d="M3.500 3.500H12.500V9.500H3.500Z" fill="#a9c4ec" stroke="#3f5f96" /><path d="M5 12V15H11V12" stroke="#444" /></svg></Cell>
    <Caret />
    <Cell $w={25}><svg width="17" height="16" viewBox="0 0 17 16" fill="none"><path d="M1 .5H16V15.500H1ZM1 3.500H16M1 6.500H16M1 9.500H16M1 12.500H16M4 .5V15.500M7 .5V15.500M10 .5V15.500M13 .5V15.500" stroke="#555" /></svg></Cell>
    <Caret />
    <Cell $w={25}><svg width="16" height="15" viewBox="0 0 16 15"><g fill="#b6cae6" stroke="#43557a"><rect x=".5" y=".5" width="7.500" height="7" rx="1" /><rect x="8" y=".5" width="7.500" height="7" rx="1" /><rect x=".5" y="7.500" width="7.500" height="7" rx="1" /><rect x="8" y="7.500" width="7.500" height="7" rx="1" /></g><path d="M3 3h3v2.500H3zM10.500 3h3v2.500h-3zM3 10h3v2.500H3zM10.500 10h3v2.500h-3z" fill="#eef3fa" /></svg></Cell>
    <Caret />
  </>
);

const PlayerIcons = () => <>
  {['M13 1V15L4 8ZM2 1H4V15H2Z', 'M10 1V15L0 8ZM12 5H14V11H12Z', 'M2 0L15 8L2 16Z', 'M5 1V15L14 8ZM1 5H3V11H1Z', 'M2 1V15L11 8ZM11 1H13V15H11Z'].map(d =>
    <Cell $w={25} key={d}><svg width="15" height="16" viewBox="0 0 15 16"><path d={d} fill="currentColor" /></svg></Cell>)}
</>;

const T = ({ children }: { children: React.ReactNode }) => <svg width="24" height="24" viewBox="0 0 24 24" fill="none">{children}</svg>;
const taskItems: { k: string; open?: boolean; bg?: string; line?: string; wide?: boolean; i: React.ReactNode }[] = [
  { k: 'cortana', i: <T><circle cx="12" cy="12" r="6.800" stroke="#fff" strokeWidth="2" /></T> },
  { k: 'tasks', i: <T><path d="M4 5.500V4M4 7.500H14V15.500H4ZM3 4.500h11V3M3 18.500h11v2M4 18.500v2M18.500 4v16" stroke="#fff" strokeWidth="1.300" /><path d="M17 8h3v4h-3z" fill="#fff" /></T> },
  { k: 'explorer', open: true, i: <T><path d="M1 3H10L12 5H22V21H1Z" fill="#f8cf60" /><path d="M1 3H10V6H1Z" fill="#e09a1a" /><path d="M5 13H19V22H15V18H9V22H5Z" fill="#3a95d8" /></T> },
  { k: 'store', i: <T><path d="M8 7V4Q8 1 12 1T16 4V7" stroke="#fff" strokeWidth="1.500" /><path d="M0 6H24V21.500Q24 23 22 23H2Q0 23 0 21.500Z" fill="#fff" /><path d="M7 9h4.500v4.500H7z" fill="#f25022" /><path d="M13 9h4.500v4.500H13z" fill="#7fba00" /><path d="M7 15h4.500v4.500H7z" fill="#00a4ef" /><path d="M13 15h4.500v4.500H13z" fill="#ffb900" /></T> },
  { k: 'meet', i: <T><rect x="1" y="1" width="22" height="22" rx="7" fill="#4087fc" /><path d="M5 8.500H13Q15 8.500 15 10V16H7Q5 16 5 14ZM16 11L19.500 8.500V16L16 13.500Z" fill="#fff" /></T> },
  { k: 'insta', i: <T><path d="M0 0H24V24H0Z" fill="#0078d7" /><rect x="6" y="6" width="12" height="12" rx="3.500" stroke="#fff" strokeWidth="1.400" /><circle cx="12" cy="12" r="3.200" stroke="#fff" strokeWidth="1.400" /><circle cx="15.300" cy="8.700" r=".9" fill="#fff" /></T> },
  { k: 'camera', i: <T><path d="M0 6H6L8 3H16L18 6H24V21H0Z" fill="#687077" /><path d="M1 4h5v2H1z" fill="#3ab0f0" /><circle cx="12" cy="13" r="6.500" fill="#fff" /><circle cx="12" cy="13" r="5" fill="#8f86e8" /><path d="M8 16A5 5 0 0 1 12 8Z" fill="#53b8f5" /></T> },
  { k: 'chrome', open: true, i: <T><circle cx="12" cy="12" r="11" fill="#fbc116" /><path d="M12 12L2.500 6.500A11 11 0 0 1 21.500 6.500Z" fill="#e33b2e" /><path d="M2.500 6.500L8 16L12 23A11 11 0 0 1 2.500 6.500Z" fill="#1ea446" /><path d="M12 7H21.800A11 11 0 0 1 12 23L16.500 14.500Z" fill="#fbc116" /><circle cx="12" cy="12" r="5.300" fill="#fff" /><circle cx="12" cy="12" r="4.200" fill="#3f7ff0" /></T> },
  { k: 'spotify', open: true, i: <T><circle cx="12" cy="12" r="11" fill="#1ed760" /><path d="M5 8.500Q12 6 19 9.500M6 12.500Q12 10.500 17.500 13.500M6.500 16Q12 14.500 16 17" stroke="#111" strokeWidth="2" strokeLinecap="round" /></T> },
  { k: 'fusion', open: true, wide: true, bg: 'linear-gradient(90deg, #686660 44px, #4e4b47 44px 46px, #696761 46px)', i: <F360 s={24} /> },
  { k: 'vpn', open: true, wide: true, line: '#ff7a0e', bg: '#b66c31', i: <T><circle cx="12" cy="12" r="10.800" fill="#24509a" /><path d="M1.200 13A10.800 10.800 0 0 1 22.800 13L19 16H5Z" fill="#3f94cf" /><path d="M4.500 17L10 8.500L11.500 10.500L13.500 8L20 17L16.500 15L14 12L12 14.500L9.500 12.500L7 15.500Z" fill="#fff" /></T> },
  { k: 'code', open: true, i: <T><path d="M17 0L24 3V21L17 24Z" fill="#2ba3ec" /><path d="M17 0V6L3 18L0 15.500ZM17 24V18L3 6L0 8.500Z" fill="#1783cc" /></T> },
  { k: 'cmd', open: true, i: <T><path d="M1 3H23V21H1Z" fill="#000" stroke="#8a8a8a" /><path d="M1 3H23V5.500H1Z" fill="#ddd" /><path d="M4 8.500H7M4 8.500V12H7M8.500 9.500v.500M8.500 12v-.500M10 8.500L12 12M14 12h4" stroke="#ddd" /></T> },
  { k: 'word', open: true, i: <T><path d="M8 1H23V21H8Z" fill="#fff" stroke="#9bb8e0" /><path d="M18 5h4M18 8h4M18 11h4" stroke="#2b62b5" /><path d="M1 3L17 1V23L1 20Z" fill="#2a5db3" /><path d="M4 7L6.200 16L9 8L11.500 16L14 7" stroke="#fff" strokeWidth="2" /><path d="M16 14L24 18L18 23Z" fill="#f3f6fb" /></T> },
  { k: 'photos', open: true, i: <T><path d="M1 1H23V23H1Z" fill="#22a9ee" /><path d="M1 15L8 8L22 23H1Z" fill="#1a4fa3" /><path d="M12 15L16 11L23 18V23H19Z" fill="#103a80" /><circle cx="16" cy="6" r="2.300" fill="#fff" /></T> },
];
const S = ({ children }: { children: React.ReactNode }) => <Cell $w={24}><svg width="16" height="16" viewBox="0 0 16 16" fill="none">{children}</svg></Cell>;

export default function App() {
  return (
    <Shell>
      <Global />
      <TitleBar>
        <F360 s={14} small />
        <TitleText>Autodesk Fusion 360 (Education License)</TitleText>
        <WinButton><svg width="10" height="10" viewBox="0 0 10 10"><path d="M0 5.500H10" stroke="#000" /></svg></WinButton>
        <WinButton><svg width="10" height="10" viewBox="0 0 10 10" fill="none"><path d="M.5 2.500H7.500V9.500H.5ZM2.500 2V.5H9.500V7.500H8" stroke="#000" /></svg></WinButton>
        <WinButton><svg width="11" height="11" viewBox="0 0 11 11"><path d="M.5.500L10.500 10.500M10.500.500L.5 10.500" stroke="#000" strokeWidth="1.100" /></svg></WinButton>
      </TitleBar>

      <Strip>
        <Quick $w={197}>
          <Cell $w={32}><svg width="14" height="14" viewBox="0 0 14 14"><path d="M0 0h4v4H0zM5 0h4v4H5zM10 0h4v4h-4zM0 5h4v4H0zM5 5h4v4H5zM10 5h4v4h-4zM0 10h4v4H0zM5 10h4v4H5zM10 10h4v4h-4z" fill="currentColor" /></svg></Cell>
          <Cell $w={33}><svg width="13" height="16" viewBox="0 0 13 16"><path d="M0 0H8V5H13V16H0ZM9 0L13 4H9Z" fill="currentColor" /></svg></Cell>
          <Caret s={7} />
          <Cell $w={44} $faded><svg width="14" height="15" viewBox="0 0 14 15" fill="none"><path d="M1 1H11.500L13 3V14H1Z" stroke="currentColor" strokeWidth="1.800" /><path d="M4 1V5H10V1M4 14V9H10V14" stroke="currentColor" strokeWidth="1.600" /><path d="M5 10h2v3H5z" fill="currentColor" /></svg></Cell>
          <Cell $w={22}><svg width="14" height="13" viewBox="0 0 14 13" fill="none"><path d="M6 1L1.500 4.500L6 8.500M2 4.500H8Q12.500 5 12.500 12.500" stroke="currentColor" strokeWidth="2" /></svg></Cell>
          <Cell $w={14}><Caret s={7} /></Cell>
          <Cell $w={33} $faded><svg width="14" height="13" viewBox="0 0 14 13" fill="none"><path d="M8 1L12.500 4.500L8 8.500M12 4.500H6Q1.500 5 1.500 12.500" stroke="currentColor" strokeWidth="2" /></svg></Cell>
          <Cell $w={4} $faded><Caret s={7} /></Cell>
        </Quick>
        <DocTab>
          <DocName>
            <svg width="16" height="15" viewBox="0 0 16 15"><path d="M8 0L16 2V11L8 15L0 11V2Z" fill="#666" /><path d="M0 2.500L8 4.500V15L0 11Z" fill="#a8a8a8" /></svg>
            silla fresa v4
          </DocName>
          <svg width="12" height="12" viewBox="0 0 12 12"><path d="M1.500 2L9.500 10M9.500 2L1.500 10" stroke="#777" strokeWidth="1.500" /></svg>
        </DocTab>
        <AddTab><svg width="13" height="13" viewBox="0 0 13 13"><path d="M6.500 0V13M0 6.500H13" stroke="#7d7d7d" strokeWidth="2.200" /></svg></AddTab>
        <Quick $w={174}>
          <Cell $w={33}><svg width="16" height="15" viewBox="0 0 16 15"><path d="M0 0H16V11H14V15L10 11H0Z" fill="#666" /><path d="M2 3H14M2 5.500H14M2 8H11" stroke="#ddd" /></svg></Cell>
          <Cell $w={33}><svg width="16" height="16" viewBox="0 0 16 16"><circle cx="8" cy="8" r="8" fill="#666" /><path d="M4 13L3 11L7 8Q6 4 10 3L9 6L11 7L13 5Q13 9 9 10L5 13Z" fill="#ddd" /></svg></Cell>
          <Cell $w={33}><svg width="16" height="16" viewBox="0 0 16 16" fill="none"><circle cx="8" cy="8" r="7.400" stroke="#666" strokeWidth="1.100" /><circle cx="8" cy="8" r="5.800" fill="#666" /><path d="M8 4V8.500H11.500" stroke="#ddd" strokeWidth="1.400" /></svg></Cell>
          <Cell $w={33}><svg width="16" height="16" viewBox="0 0 16 16" fill="none"><circle cx="8" cy="8" r="8" fill="#666" /><path d="M5.500 6Q5.500 3.700 8 3.700T10.500 6Q10.500 7.500 8 8.500V10M8 11.500V13.300" stroke="#e0e0e0" strokeWidth="1.800" /></svg></Cell>
          <Avatar>IC</Avatar>
        </Quick>
      </Strip>

      <Ribbon>
        <DesignButton>DESIGN <Caret /></DesignButton>
        <RibbonBody>
          <Tabs>
            <Tab $w={57} $active><TabText $active>SOLID</TabText></Tab>
            <Tab $w={113}><TabText>SURFACE</TabText></Tab>
            <Tab $w={95}><TabText>SHEET METAL</TabText></Tab>
            <Tab $w={97}><TabText>TOOLS</TabText></Tab>
          </Tabs>
          <Groups>
            {groups.map(g => (
              <Group $w={g.w} key={g.name}>
                <Tools>{g.icons.map((I, i) => <I key={i} />)}</Tools>
                <GroupLabel>{g.name} <Caret /></GroupLabel>
              </Group>
            ))}
            <Group $w={74} $last>
              <Tools><SelectTile><SelectIcon /></SelectTile></Tools>
              <GroupLabel>SELECT <Caret /></GroupLabel>
            </Group>
          </Groups>
        </RibbonBody>
      </Ribbon>

      <Canvas>
        <Viewport />
        <Side>
          <PanelHead>
            <Collapse><svg width="10" height="7" viewBox="0 0 10 7"><path d="M5 0V7L0 3.500ZM10 0V7L5 3.500Z" fill="#222" /></svg></Collapse>
            <HeadName>BROWSER</HeadName>
            <svg width="10" height="10" viewBox="0 0 10 10"><circle cx="5" cy="5" r="4.700" fill="#2b2b2b" /><path d="M2.500 5h5" stroke="#fff" strokeWidth="1.500" /></svg>
            <Grip />
          </PanelHead>
          <TreeArea>
            <Track><Thumb /></Track>
            <Tree>
              <Row $in={6}>
                <Twist $w={20}><Open /></Twist>
                <Chip $w={164}>
                  <Eye />
                  <RootName><Slot $w={31}><CubeGlyph /></Slot>silla fresa v4</RootName>
                  <Slot $w={15} $gap={4}><svg width="14" height="14" viewBox="0 0 14 14" fill="none"><circle cx="7" cy="7" r="6" stroke="#222" strokeWidth="1.200" /><circle cx="7" cy="7" r="2.200" fill="#222" /></svg></Slot>
                </Chip>
              </Row>
              <Row $in={25}><Twist $w={19}><Closed /></Twist><Chip $w={134}><Slot $w={30}><Gear /></Slot>Document Settings</Chip></Row>
              <Row $in={25}><Twist $w={19}><Closed /></Twist><Chip $w={110}><Slot $w={30}><Folder /></Slot>Named Views</Chip></Row>
              <Row $in={25}><Twist $w={19}><Closed /></Twist><Chip $w={95}><Slot $w={25}><Eye /></Slot><Slot $w={30}><Folder /></Slot>Origin</Chip></Row>
              <Row $in={24}><Twist $w={20}><Open /></Twist><Chip $w={103}><Slot $w={25}><Eye /></Slot><Slot $w={30}><Folder /></Slot>Bodies<Stitch /></Chip></Row>
              {bodies.map(([name, w]) => (
                <Row $in={62} key={name}>
                  <Chip $w={w}>
                    <Slot $w={25}><Eye off={name === 'Body20'} /></Slot>
                    {name === 'Body20'
                      ? <Picked><Slot $w={30}><BodyGlyph /></Slot>{name}</Picked>
                      : <><Slot $w={30}><BodyGlyph /></Slot>{name}</>}
                  </Chip>
                </Row>
              ))}
            </Tree>
          </TreeArea>
          <PanelHead $top={23}>
            <Collapse />
            <HeadName>COMMENTS</HeadName>
            <svg width="10" height="10" viewBox="0 0 10 10"><circle cx="5" cy="5" r="4.700" fill="#2b2b2b" /><path d="M2.500 5h5M5 2.500v5" stroke="#fff" strokeWidth="1.500" /></svg>
            <Grip />
          </PanelHead>
        </Side>
        <NavBar><NavIcons /></NavBar>
        <Hint>Body20</Hint>
      </Canvas>

      <Timeline>
        <Player><PlayerIcons /></Player>
        <Steps>
          {steps.split('').map((s, i) => {
            const hot = (i >= 3 && i <= 11) || i === 15;
            return (
              <Step key={i} $hot={hot} $end={i === 0 ? 'l' : i === steps.length - 1 ? 'r' : undefined}>
                <StepIcon $faded={i === 11} $raised={s === 'e'}>{tl[s](hot)}</StepIcon>
              </Step>
            );
          })}
        </Steps>
        <TimelineEnd>
          <svg width="14" height="34" viewBox="0 0 14 34"><path d="M1 1H13V6L8.500 10V33H6V10L1 6Z" fill="#606060" /></svg>
          <Gear s={17} />
        </TimelineEnd>
      </Timeline>

      <TaskBar>
        <StartButton><svg width="16" height="16" viewBox="0 0 16 16"><path d="M0 2.300L6.500 1.400V7.600H0ZM7.500 1.200L16 0V7.600H7.500ZM0 8.500H6.500V14.700L0 13.700ZM7.500 8.500H16V16L7.500 14.800Z" fill="#fff" /></svg></StartButton>
        <Search>
          <svg width="17" height="17" viewBox="0 0 17 17" fill="none"><circle cx="10.500" cy="6.300" r="5.300" stroke="#222" strokeWidth="1.400" /><path d="M6.500 10.300L1 16" stroke="#222" strokeWidth="1.500" /></svg>
          Escribe aquí para buscar
        </Search>
        {taskItems.map(t => <TaskItem key={t.k} $open={t.open} $bg={t.bg} $line={t.line} $wide={t.wide}>{t.i}</TaskItem>)}
        <Tray>
          <S><path d="M2 11L8 5L14 11" stroke="#fff" strokeWidth="1.300" /></S>
          <S><path d="M4 1L8 3.500L4 6L0 3.500ZM12 1L16 3.500L12 6L8 3.500ZM4 6L8 8.500L4 11L0 8.500ZM12 6L16 8.500L12 11L8 8.500ZM4 12L8 9.500L12 12L8 14.500Z" fill="#8f9295" /></S>
          <S><path d="M3 13Q0 12 0 9.500Q1 7 4 7Q5 3 9 4Q12 4 12.500 7Q16 7 16 10T13 13Z" fill="#8b8d90" /><path d="M1 2L15 15" stroke="#fff" strokeWidth="1.300" /></S>
          <S><path d="M0 0H16V16H0Z" fill="#0f82e8" /><circle cx="8" cy="8" r="6.500" fill="#fff" /><path d="M2.500 8L6 5.500V7.200H10V5.500L13.500 8L10 10.500V8.800H6V10.500Z" fill="#0f82e8" /></S>
          <S><ellipse cx="8" cy="7" rx="4" ry="8" transform="rotate(-35 8 7)" fill="#111" stroke="#bbb" /><path d="M1 10L6 6L8 12L1 14Z" fill="#ccc" /></S>
          <S><path d="M8 0L15 2.500V8Q14 13.500 8 16Q2 13.500 1 8V2.500Z" fill="#fff" /><path d="M8 1V14M1.500 7.500H14" stroke="#222" strokeWidth="1.300" /><circle cx="12" cy="12" r="4" fill="#18a84c" /><path d="M10 12l1.500 1.500L14 10.500" stroke="#fff" /></S>
          <S><path d="M5 5V1H11V5M3.500 5H12.500V11M3.500 5V15H8M7 2.500v1M9 2.500v1" stroke="#fff" strokeWidth="1.200" /><path d="M9 13L11 15L15 10.500" stroke="#ddd" strokeWidth="1.300" /></S>
          <S><rect x="2" y="0" width="12" height="16" rx="5.500" fill="#0a84f0" /><path d="M5 5L11 11L8 13.500V2.500L11 5L5 11" stroke="#fff" strokeWidth="1.200" /></S>
          <S><path d="M0 0H16V16H0Z" fill="#222b22" stroke="#555" /><path d="M1 8Q4 4 8 4V3H15V13H8Q3 12 1 8Z" fill="#76b900" /><path d="M4 8Q7 5 11 8Q8 11 6.500 8" stroke="#1c241c" strokeWidth="1.200" /></S>
          <S><path d="M0 5.500H3L6.500 2.500V13.500L3 10.500H0Z" stroke="#fff" strokeWidth="1.100" /><path d="M8.500 6Q10 8 8.500 10M11 4.500Q13 8 11 11.500" stroke="#fff" strokeWidth="1.200" /><path d="M13 2.500Q16 8 13 13.500" stroke="#999" /></S>
          <S><path d="M2 13Q3 3 14 2.500M5.500 14Q6 6 14 5.500M8.500 14Q9 9.500 14 9" stroke="#ddd" strokeWidth="1.200" /><circle cx="12.500" cy="13" r="1.600" fill="#fff" /></S>
          <Lang>ESP</Lang>
          <Clock>9:56<br />21/07/2020</Clock>
          <Notice>
            <svg width="28" height="28" viewBox="0 0 28 28" fill="none"><path d="M3 4H18V17H10L6 20V17H3Z" fill="#fff" /><path d="M5.500 7H15.500M5.500 10H15.500M5.500 13H11" stroke="#333" strokeWidth="1.200" /><circle cx="18.500" cy="19.500" r="7.500" fill="#2f3835" stroke="#9aa09d" /><text x="18.500" y="24" textAnchor="middle" fontFamily={segoe} fontSize="12" fill="#fff">1</text></svg>
          </Notice>
        </Tray>
      </TaskBar>
    </Shell>
  );
}
